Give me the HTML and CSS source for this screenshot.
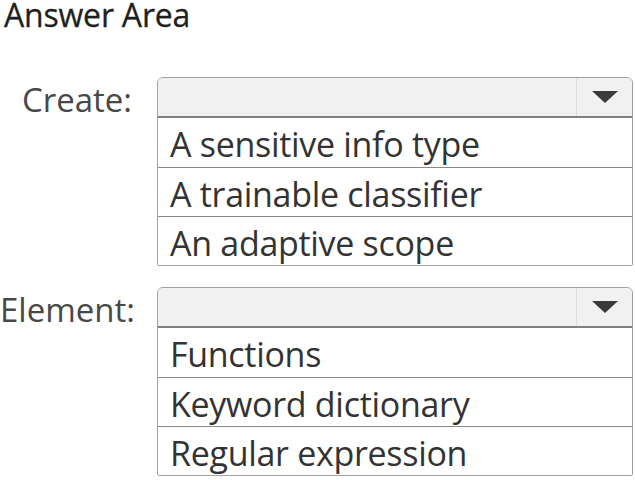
FILE: index.html
```html
<!DOCTYPE html>
<html>
<head>
<meta charset="utf-8">
<link rel="stylesheet" href="styles.css">
</head>
<body>
<div class="page">
  <div class="title">Answer Area</div>
  <div class="field create">
    <div class="label">Create:</div>
    <div class="select">
      <div class="head"><div class="value"></div><div class="btn"><svg width="26" height="12" viewBox="0 0 26 12"><polygon points="0,0 26,0 13,12" fill="#3a3a3a"/></svg></div></div>
      <div class="opt">A sensitive info type</div>
      <div class="opt">A trainable classifier</div>
      <div class="opt">An adaptive scope</div>
    </div>
  </div>
  <div class="field element">
    <div class="label">Element:</div>
    <div class="select">
      <div class="head"><div class="value"></div><div class="btn"><svg width="26" height="12" viewBox="0 0 26 12"><polygon points="0,0 26,0 13,12" fill="#3a3a3a"/></svg></div></div>
      <div class="opt">Functions</div>
      <div class="opt">Keyword dictionary</div>
      <div class="opt">Regular expression</div>
    </div>
  </div>
</div>
</body>
</html>
```
FILE: styles.css
```css
html, body { margin: 0; padding: 0; background: #fff; }
body { font-family: "Open Sans", "Noto Sans", sans-serif; color: #333; }
.page { width: 635px; height: 480px; overflow: hidden; }
.title { font-size: 32px; font-weight: 400; line-height: 28px; padding-top: 1px; padding-left: 4px; color: #1f1f1f; letter-spacing: -0.2px; -webkit-text-stroke: 0.3px #1f1f1f; }
.field { display: grid; grid-template-columns: 157px 476px; }
.create { margin-top: 48px; }
.element { margin-top: 21px; }
.label { font-size: 33px; text-align: right; padding-right: 25px; padding-top: 3px; line-height: 40px; color: #484848; }
.select { border: 1px solid #a0a0a0; border-radius: 6px 6px 2px 2px; overflow: hidden; }
.head { display: flex; height: 38px; background: #f1f1f1; border-bottom: 2px solid #808080; }
.value { flex: 1; }
.btn { width: 55px; border-left: 1px solid #dcdcdc; display: flex; align-items: center; justify-content: center; }
.opt { height: 45px; padding-top: 3px; border-top: 1px solid #8a8a8a; font-size: 34px; line-height: 46px; padding-left: 12px; color: #333; letter-spacing: -0.3px; background: #fff; white-space: nowrap; }
.head + .opt { border-top: none; height: 46px; }
```
